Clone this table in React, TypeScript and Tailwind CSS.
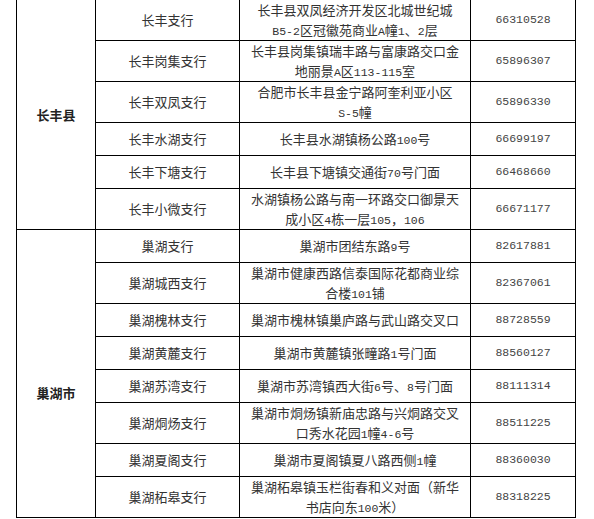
import React from "react";

interface Branch {
  name: string;
  addr: string[];
  phone: string;
}

interface County {
  county: string;
  branches: Branch[];
  shift?: boolean;
}

const data: County[] = [
  {
    county: "长丰县",
    branches: [
      { name: "长丰支行", addr: ["长丰县双凤经济开发区北城世纪城", "B5-2区冠徽苑商业A幢1、2层"], phone: "66310528" },
      { name: "长丰岗集支行", addr: ["长丰县岗集镇瑞丰路与富康路交口金", "地丽景A区113-115室"], phone: "65896307" },
      { name: "长丰双凤支行", addr: ["合肥市长丰县金宁路阿奎利亚小区", "S-5幢"], phone: "65896330" },
      { name: "长丰水湖支行", addr: ["长丰县水湖镇杨公路100号"], phone: "66699197" },
      { name: "长丰下塘支行", addr: ["长丰县下塘镇交通街70号门面"], phone: "66468660" },
      { name: "长丰小微支行", addr: ["水湖镇杨公路与南一环路交口御景天", "成小区4栋一层105，106"], phone: "66671177" },
    ],
  },
  {
    county: "巢湖市",
    shift: true,
    branches: [
      { name: "巢湖支行", addr: ["巢湖市团结东路9号"], phone: "82617881" },
      { name: "巢湖城西支行", addr: ["巢湖市健康西路信泰国际花都商业综", "合楼101铺"], phone: "82367061" },
      { name: "巢湖槐林支行", addr: ["巢湖市槐林镇巢庐路与武山路交叉口"], phone: "88728559" },
      { name: "巢湖黄麓支行", addr: ["巢湖市黄麓镇张疃路1号门面"], phone: "88560127" },
      { name: "巢湖苏湾支行", addr: ["巢湖市苏湾镇西大街6号、8号门面"], phone: "88111314" },
      { name: "巢湖烔炀支行", addr: ["巢湖市烔炀镇新庙忠路与兴烔路交叉", "口秀水花园1幢4-6号"], phone: "88511225" },
      { name: "巢湖夏阁支行", addr: ["巢湖市夏阁镇夏八路西侧1幢"], phone: "88360030" },
      { name: "巢湖柘皋支行", addr: ["巢湖柘皋镇玉栏街春和义对面（新华", "书店向东100米）"], phone: "88318225" },
    ],
  },
];

// ascii bits get the narrow mono face, like the old song-style half-width digits
const mix = (text: string) =>
  text.split(/([\x00-\x7F]+)/).map((part, i) =>
    /^[\x00-\x7F]+$/.test(part) ? (
      <span key={i} className="font-['Liberation_Mono',monospace] text-[11.5px] leading-none">
        {part}
      </span>
    ) : (
      <React.Fragment key={i}>{part}</React.Fragment>
    )
  );

const App: React.FC = () => {
  return (
    <div className="w-[594px] h-[519px] overflow-hidden bg-white">
      <table className="ml-4 -mt-px w-[560px] table-fixed border-collapse font-['Noto_Sans_CJK_SC',sans-serif] text-[13px] leading-[20px] text-[#333]">
        <colgroup>
          <col className="w-[79px]" />
          <col className="w-[144px]" />
          <col className="w-[231px]" />
          <col className="w-[105px]" />
        </colgroup>
        <tbody>
          {data.map((group) =>
            group.branches.map((b, i) => (
              <tr key={b.name} className={b.addr.length > 1 ? "h-[41px]" : "h-[33px]"}>
                {i === 0 && (
                  <td
                    rowSpan={group.branches.length}
                    className={`border border-black p-0 text-center align-middle font-bold text-[#222] ${group.shift ? "pt-[38px]" : ""}`}
                  >
                    {group.county}
                  </td>
                )}
                <td className="border border-black p-0 text-center align-middle">{b.name}</td>
                <td className="border border-black px-1 py-0 text-center align-middle">
                  {b.addr.map((line, k) => (
                    <div key={k} className="h-[20px] whitespace-nowrap">
                      {mix(line)}
                    </div>
                  ))}
                </td>
                <td className="border border-black p-0 text-center align-middle font-['Liberation_Mono',monospace] text-[11.5px] text-[#444]">
                  {b.phone}
                </td>
              </tr>
            ))
          )}
        </tbody>
      </table>
    </div>
  );
};

export default App;
